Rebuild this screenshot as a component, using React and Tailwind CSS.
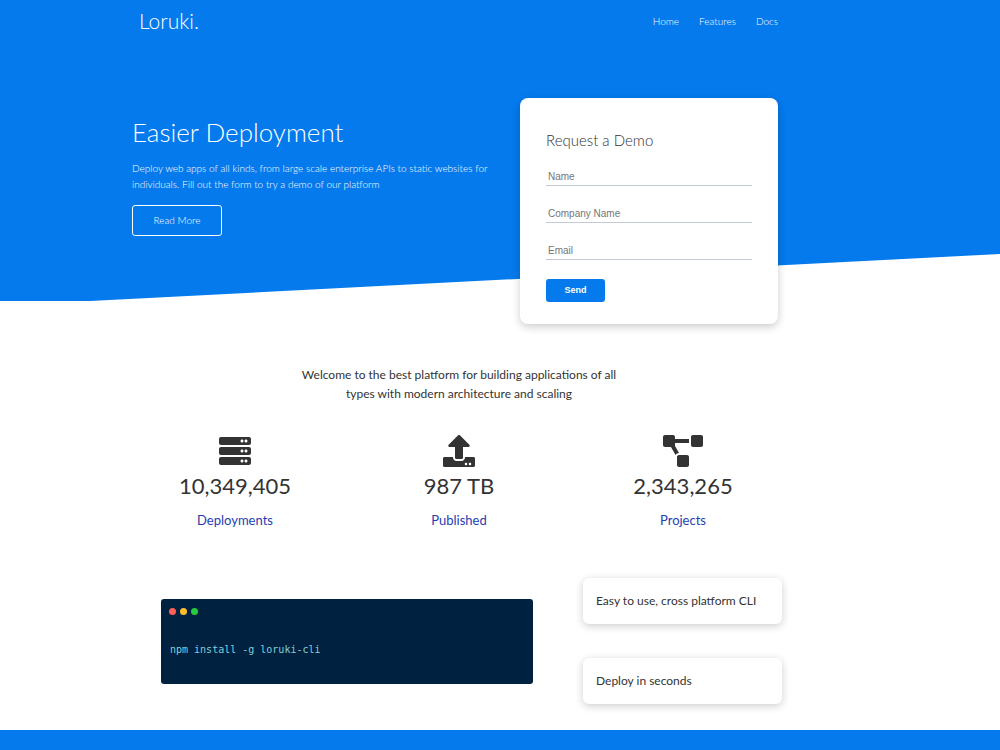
import { FaServer, FaUpload, FaProjectDiagram } from "react-icons/fa";

const NAV = ["Home", "Features", "Docs"];

const FIELDS = [
  { id: "name", label: "Name", type: "text" },
  { id: "company", label: "Company Name", type: "text" },
  { id: "email", label: "Email", type: "email" },
];

const STATS = [
  { icon: FaServer, value: "10,349,405", label: "Deployments" },
  { icon: FaUpload, value: "987 TB", label: "Published" },
  { icon: FaProjectDiagram, value: "2,343,265", label: "Projects" },
];

function Navbar() {
  return (
    <header className="flex h-[42px] items-center justify-between pl-4 pr-[17px] text-white font-light">
      <div className="text-[21px]">Loruki.</div>
      <nav>
        <ul className="flex gap-5 text-[10px]">
          {NAV.map((item) => (
            <li key={item}>
              <a href="#">{item}</a>
            </li>
          ))}
        </ul>
      </nav>
    </header>
  );
}

function DemoForm() {
  return (
    <div className="w-[258px] shrink-0 rounded-lg bg-white px-[26px] pb-[22px] pt-[30px] shadow-[0_3px_8px_rgba(0,0,0,0.2)]">
      <h2 className="text-[15px] leading-6 font-light text-[#333]">Request a Demo</h2>
      <form className="font-['Liberation_Sans',sans-serif]" onSubmit={(e) => e.preventDefault()}>
        <div className="mt-4 flex flex-col gap-[19px]">
          {FIELDS.map((f) => (
            <input
              key={f.id}
              id={f.id}
              type={f.type}
              aria-label={f.label}
              placeholder={f.label}
              className="h-[18px] w-full border-b border-[#c3c9d8] px-[2px] text-[10px] outline-none placeholder:text-[#757575]"
            />
          ))}
        </div>
        <button type="submit" className="mt-[19px] block h-[23px] w-[59px] rounded-[3px] bg-[#047aed] text-[9px] font-bold text-white">
          Send
        </button>
      </form>
    </div>
  );
}

function Hero() {
  return (
    <section className="flex items-start justify-between pl-[9px] pr-[17px] pt-14">
      <div className="pt-4 font-light text-white">
        <h1 className="text-[26px] leading-9">Easier Deployment</h1>
        <p className="mt-[10px] w-[370px] text-[10px] leading-4">
          Deploy web apps of all kinds, from large scale enterprise APIs to static websites for individuals. Fill out the
          form to try a demo of our platform
        </p>
        <a
          href="#"
          className="mt-[13px] flex h-[31px] w-[90px] items-center justify-center rounded-[3px] border border-white text-[10px]"
        >
          Read More
        </a>
      </div>
      <DemoForm />
    </section>
  );
}

function Stats() {
  return (
    <section className="pt-[41px] text-center">
      <h3 className="mx-auto w-[320px] text-xs leading-[19px]">
        Welcome to the best platform for building applications of all types with modern architecture and scaling
      </h3>
      <div className="mt-8 grid grid-cols-3">
        {STATS.map(({ icon: Icon, value, label }) => (
          <div key={label} className="flex flex-col items-center">
            <Icon className="h-8 w-10" />
            <div className="mt-[3px] text-[22px] leading-8">{value}</div>
            <p className="mt-2 text-[13px] leading-5 text-[#2440b3]">{label}</p>
          </div>
        ))}
      </div>
    </section>
  );
}

function Cli() {
  return (
    <section className="flex items-center justify-between pb-[26px] pl-[38px] pr-[13px] pt-12">
      <div className="h-[85px] w-[372px] rounded-[3px] bg-[#002240] px-2 pt-[9px]">
        <div className="flex gap-1">
          <span className="size-[7px] rounded-full bg-[#ff5f56]" />
          <span className="size-[7px] rounded-full bg-[#ffbd2e]" />
          <span className="size-[7px] rounded-full bg-[#27c93f]" />
        </div>
        <code className="mt-[27px] block pl-px font-['DejaVu_Sans_Mono',monospace] text-[10px] leading-4 text-[#80cfd8]">
          npm install -g loruki-cli
        </code>
      </div>
      <div className="flex w-[199px] flex-col gap-[34px] text-xs leading-5">
        <h3 className="rounded-md bg-white p-[13px] shadow-[0_2px_8px_rgba(0,0,0,0.2)]">Easy to use, cross platform CLI</h3>
        <h3 className="rounded-md bg-white p-[13px] shadow-[0_2px_8px_rgba(0,0,0,0.2)]">Deploy in seconds</h3>
      </div>
    </section>
  );
}

export default function App() {
  return (
    <div className="flex min-h-screen flex-col bg-white font-['Lato',sans-serif] text-[#333]">
      <div className="grid">
        {/* slanted backdrop shares the grid cell with the nav and hero */}
        <div className="col-start-1 row-start-1 mb-[23px] bg-[#047aed] [clip-path:polygon(0_0,100%_0,100%_254px,9%_100%,0_100%)]" />
        <div className="z-10 col-start-1 row-start-1 pr-[82px]">
          <div className="mx-auto max-w-[672px]">
            <Navbar />
            <Hero />
          </div>
        </div>
      </div>
      <main className="pr-[82px]">
        <div className="mx-auto max-w-[672px]">
          <Stats />
          <Cli />
        </div>
      </main>
      <footer className="min-h-5 grow bg-[#047aed]" />
    </div>
  );
}
